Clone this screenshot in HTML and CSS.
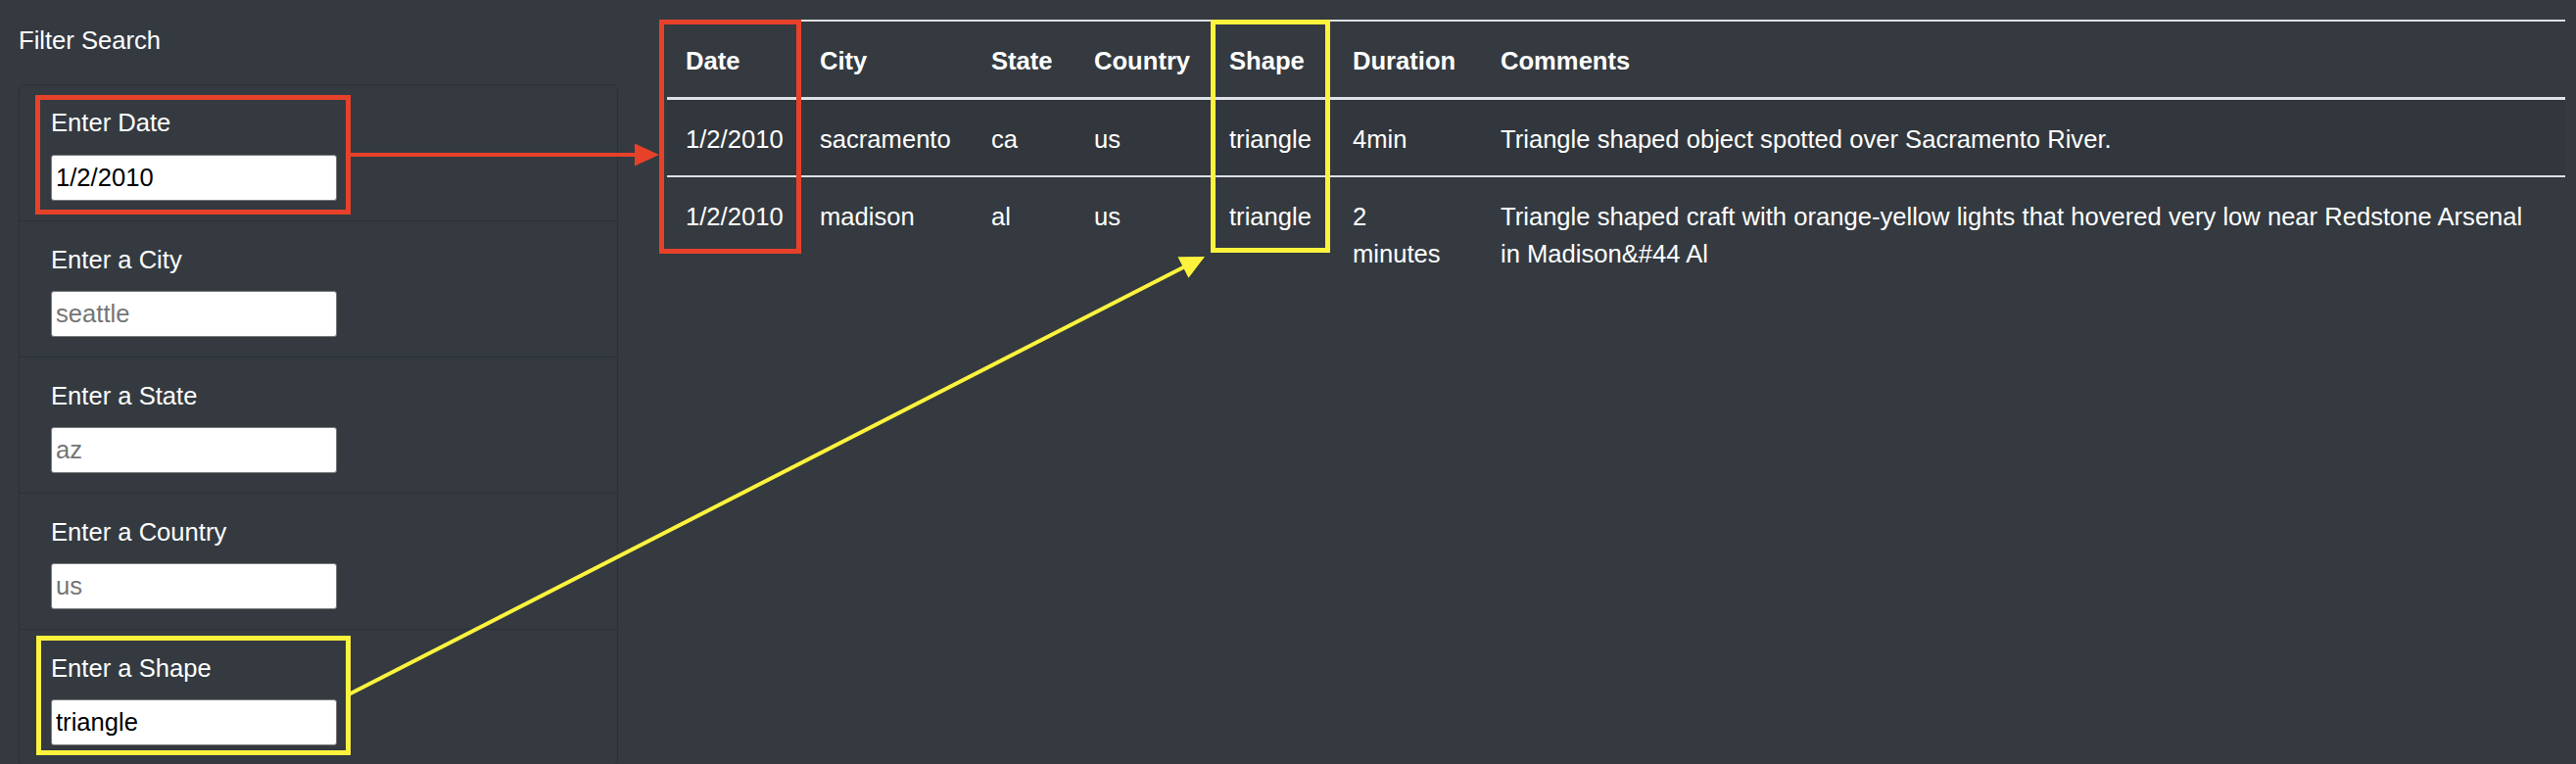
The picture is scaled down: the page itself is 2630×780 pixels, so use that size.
FILE: index.html
```html
<!DOCTYPE html>
<html lang="en">
<head>
<meta charset="utf-8">
<title>UFO Sightings</title>
<link rel="stylesheet" href="styles.css">
</head>
<body>
<div class="page">
  <aside class="filters">
    <h5 class="filters-title">Filter Search</h5>
    <ul class="filter-list">
      <li class="filter-item">
        <label class="filter-label" for="datetime">Enter Date</label>
        <input class="filter-input" id="datetime" type="text" value="1/2/2010" placeholder="1/10/2010">
      </li>
      <li class="filter-item">
        <label class="filter-label" for="city">Enter a City</label>
        <input class="filter-input" id="city" type="text" placeholder="seattle">
      </li>
      <li class="filter-item">
        <label class="filter-label" for="state">Enter a State</label>
        <input class="filter-input" id="state" type="text" placeholder="az">
      </li>
      <li class="filter-item">
        <label class="filter-label" for="country">Enter a Country</label>
        <input class="filter-input" id="country" type="text" placeholder="us">
      </li>
      <li class="filter-item">
        <label class="filter-label" for="shape">Enter a Shape</label>
        <input class="filter-input" id="shape" type="text" value="triangle" placeholder="circle">
      </li>
    </ul>
  </aside>
  <main class="results">
    <table class="ufo-table">
      <colgroup>
        <col class="col-date">
        <col class="col-city">
        <col class="col-state">
        <col class="col-country">
        <col class="col-shape">
        <col class="col-duration">
        <col class="col-comments">
      </colgroup>
      <thead>
        <tr>
          <th>Date</th>
          <th>City</th>
          <th>State</th>
          <th>Country</th>
          <th>Shape</th>
          <th class="cell-duration">Duration</th>
          <th class="cell-comments">Comments</th>
        </tr>
      </thead>
      <tbody>
        <tr class="row-odd">
          <td>1/2/2010</td>
          <td>sacramento</td>
          <td>ca</td>
          <td>us</td>
          <td>triangle</td>
          <td class="cell-duration">4min</td>
          <td class="cell-comments">Triangle shaped object spotted over Sacramento River.</td>
        </tr>
        <tr>
          <td>1/2/2010</td>
          <td>madison</td>
          <td>al</td>
          <td>us</td>
          <td>triangle</td>
          <td class="cell-duration">2 minutes</td>
          <td class="cell-comments">Triangle shaped craft with orange-yellow lights that hovered very low near Redstone Arsenal in Madison&amp;#44 Al</td>
        </tr>
      </tbody>
    </table>
  </main>
</div>
<svg class="annotations" width="2630" height="780" viewBox="0 0 2630 780" aria-hidden="true">
  <g class="mark-red">
    <rect x="38.5" y="99.5" width="317" height="117"></rect>
    <rect x="675.5" y="22.5" width="140" height="234"></rect>
    <line x1="356" y1="158" x2="650" y2="158"></line>
    <polygon points="648,146.5 673,158 648,169.5"></polygon>
  </g>
  <g class="mark-yellow">
    <rect x="39.5" y="651.5" width="316" height="117"></rect>
    <rect x="1238.5" y="22.5" width="117" height="233"></rect>
    <line x1="356" y1="709" x2="1210" y2="272"></line>
    <polygon points="1230,262 1202.5,262.3 1213.5,283.7"></polygon>
  </g>
</svg>
</body>
</html>
```
FILE: styles.css
```css
html, body {
  margin: 0;
  padding: 0;
  height: 780px;
  overflow: hidden;
  background: #343a40;
}

body {
  position: relative;
  font-family: "Liberation Sans", Arial, sans-serif;
  font-size: 25.6px;
  line-height: 38.4px;
  color: #ffffff;
}

.page {
  display: flex;
  align-items: flex-start;
  padding: 20px 11px 0 19px;
}

/* ---------- left filter column ---------- */
.filters {
  flex: none;
  width: 612px;
}

.filters-title {
  margin: 2px 0 26px;
  font-size: 25.6px;
  font-weight: 400;
  line-height: 38.4px;
}

.filter-list {
  list-style: none;
  margin: 0;
  padding: 0;
  border: 1px solid rgba(0, 0, 0, 0.14);
  border-radius: 6px;
}

.filter-item {
  padding: 20px 32px 20px;
  border-top: 1px solid rgba(0, 0, 0, 0.14);
}

.filter-item:first-child {
  padding-top: 19px;
  border-top: none;
}

.filter-label {
  display: block;
  margin-bottom: 12.8px;
}

.filter-input {
  display: block;
  box-sizing: border-box;
  width: 292px;
  height: 47px;
  margin: 0;
  padding: 0 4px;
  border: 1px solid #7a7a7a;
  border-radius: 3px;
  background: #ffffff;
  color: #000000;
  font-family: "Liberation Sans", Arial, sans-serif;
  font-size: 25.6px;
  outline: none;
}

.filter-input::placeholder {
  color: #757575;
}

/* ---------- right results table ---------- */
.results {
  flex: 1;
  margin-left: 50px;
}

.ufo-table {
  width: 100%;
  table-layout: fixed;
  border-collapse: collapse;
  color: #ffffff;
}

.col-date { width: 137px; }
.col-city { width: 175px; }
.col-state { width: 105px; }
.col-country { width: 138px; }
.col-shape { width: 126px; }
.col-duration { width: 151px; }
.col-comments { width: auto; }

.ufo-table th,
.ufo-table td {
  padding: 21px 19px 17.6px;
  text-align: left;
  vertical-align: top;
  white-space: nowrap;
  border-top: 2px solid #dee2e6;
}

.ufo-table th {
  font-weight: 700;
  border-bottom: 3px solid #dee2e6;
}

.ufo-table .cell-duration {
  padding-right: 24px;
  white-space: normal;
}

.ufo-table .cell-comments {
  padding-right: 30px;
  white-space: normal;
}

.row-odd {
  background: rgba(0, 0, 0, 0.05);
}

/* ---------- annotation overlay ---------- */
.annotations {
  position: absolute;
  top: 0;
  left: 0;
  pointer-events: none;
}

.annotations rect {
  fill: none;
  stroke-width: 5;
}

.annotations line {
  stroke-width: 4;
}

.mark-red rect,
.mark-red line {
  stroke: #e8412a;
}

.mark-red polygon {
  fill: #e8412a;
}

.mark-yellow rect,
.mark-yellow line {
  stroke: #fdf33d;
}

.mark-yellow polygon {
  fill: #fdf33d;
}
```
